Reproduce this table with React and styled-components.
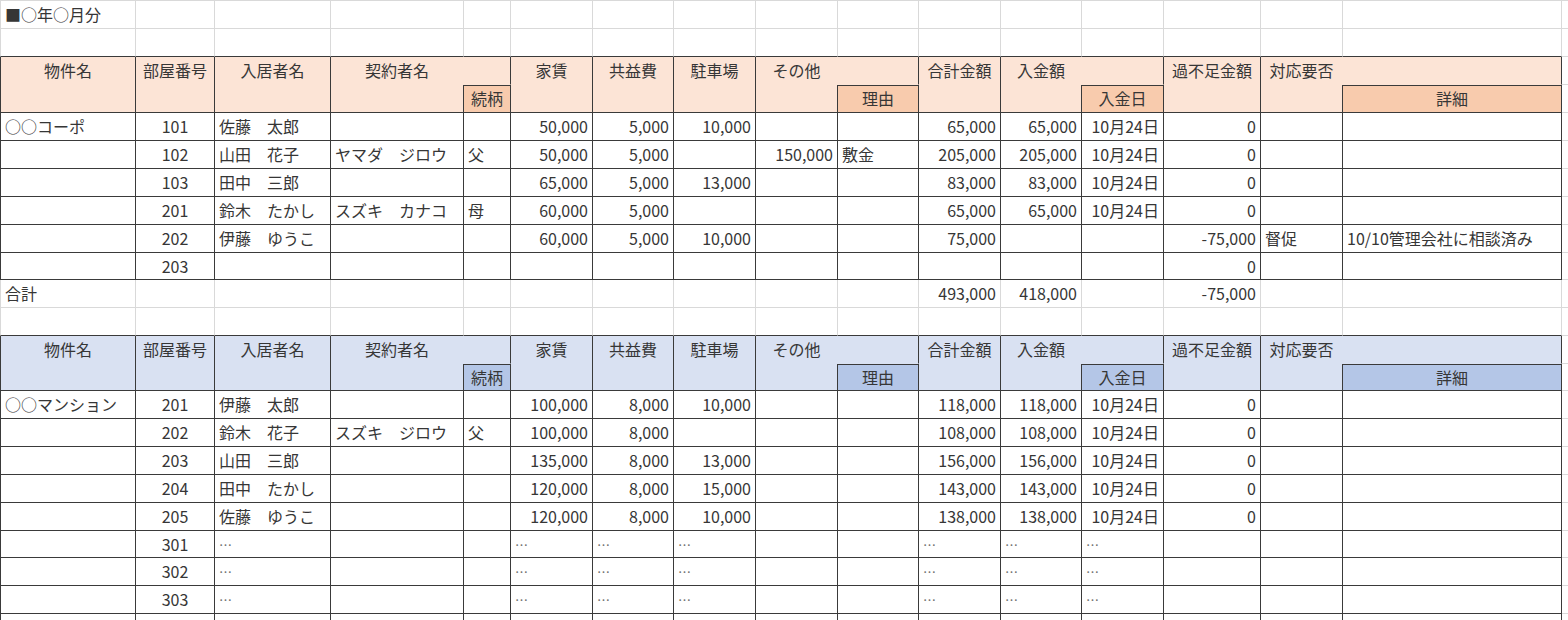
import React from 'react';
import styled, { createGlobalStyle, css } from 'styled-components';

const GRID = '#d9d9d9';
const LINE = '#3a3a3a';
const INK = '#363636';

const THEMES = {
  orange: { light: '#fce4d6', strong: '#f8cbad' },
  blue: { light: '#d9e1f2', strong: '#b4c6e7' },
};

const COL_WIDTHS = [136, 79, 116, 133, 47, 82, 81, 82, 82, 81, 82, 81, 82, 97, 82, 219];
const ROW_HEIGHTS = [28, 28, 28, 28, 28, 28, 28, 28, 28, 27, 28, 28, 28, 27, 28, 28, 28, 28, 28, 27, 28, 28, 28];

const Global = createGlobalStyle`
  html, body {
    margin: 0;
    padding: 0;
    background: #ffffff;
    overflow: hidden;
  }
  body {
    font-family: "Noto Sans CJK JP", "Noto Sans", sans-serif;
    color: ${INK};
  }
`;

const edge = (v) => (v === 'dark' ? LINE : v === 'none' ? 'transparent' : GRID);
const justify = { left: 'flex-start', center: 'center', right: 'flex-end' };

const Sheet = styled.div`
  display: grid;
  width: 1568px;
  grid-template-columns: ${COL_WIDTHS.map((w) => `${w}px`).join(' ')} 1fr;
  grid-template-rows: ${ROW_HEIGHTS.map((h) => `${h}px`).join(' ')};
  border-top: 1px solid ${GRID};
`;

const Cell = styled.div`
  box-sizing: border-box;
  min-width: 0;
  display: flex;
  align-items: ${(p) => (p.$head ? 'flex-start' : 'center')};
  justify-content: ${(p) => justify[p.$align || 'left']};
  padding: 0 ${(p) => 4 + (p.$padRight || 0)}px 0 4px;
  font-size: 16px;
  line-height: 27px;
  white-space: nowrap;
  overflow: visible;
  color: ${INK};
  background: ${(p) => p.$bg || 'transparent'};
  border-right: 1px solid ${(p) => edge(p.$r)};
  border-bottom: 1px solid ${(p) => edge(p.$b)};
  ${(p) => p.$l && css`border-left: 1px solid ${edge(p.$l)};`}
  ${(p) => p.$rs && css`grid-row: span ${p.$rs};`}
  ${(p) => p.$cs && css`grid-column: span ${p.$cs};`}
  ${(p) => p.$top && css`box-shadow: inset 0 1px 0 ${LINE};`}
`;

const Dots = styled.span`
  font-size: 13px;
  color: #707070;
  letter-spacing: -1px;
`;

const DATA_ALIGN = ['left', 'center', 'left', 'left', 'left', 'right', 'right', 'right', 'right', 'left', 'right', 'right', 'right', 'right', 'left', 'left'];

function renderValue(v) {
  if (v === '…') return <Dots>…</Dots>;
  return v;
}

function GridRow({ values = [], aboveTable, id }) {
  return Array.from({ length: 17 }, (_, i) => (
    <Cell
      key={`${id}-${i}`}
      $align={DATA_ALIGN[i] || 'left'}
      $r="light"
      $b={aboveTable && i < 16 ? 'dark' : 'light'}
      $l={i === 0 ? 'light' : undefined}
    >
      {values[i] || ''}
    </Cell>
  ));
}

function DataRow({ values, id }) {
  return Array.from({ length: 17 }, (_, i) => {
    const v = values[i] || '';
    const inTable = i < 16;
    return (
      <Cell
        key={`${id}-${i}`}
        $align={v === '…' ? 'left' : DATA_ALIGN[i] || 'left'}
        $r={inTable ? 'dark' : 'light'}
        $b={inTable ? 'dark' : 'light'}
        $l={i === 0 ? 'dark' : undefined}
      >
        {renderValue(v)}
      </Cell>
    );
  });
}

function HeaderRows({ theme, id }) {
  const { light, strong } = THEMES[theme];
  const tall = (label, extra = {}) => (
    <Cell key={`${id}-${label}`} $head $align="center" $rs={2} $bg={light} $r="dark" $b="dark" {...extra}>
      {label}
    </Cell>
  );
  const wide = (label, pad) => (
    <Cell key={`${id}-${label}`} $head $align="center" $cs={2} $padRight={pad} $bg={light} $r="dark" $b="none">
      {label}
    </Cell>
  );
  const blank = (k) => <Cell key={`${id}-b${k}`} $bg={light} $r="dark" $b="dark" />;
  const sub = (label) => (
    <Cell key={`${id}-${label}`} $align="center" $top $bg={strong} $r="dark" $b="dark">
      {label}
    </Cell>
  );
  const outside = (k) => <Cell key={`${id}-q${k}`} $r="light" $b="light" />;
  return [
    tall('物件名', { $l: 'dark' }),
    tall('部屋番号'),
    tall('入居者名'),
    wide('契約者名', 47),
    tall('家賃'),
    tall('共益費'),
    tall('駐車場'),
    wide('その他', 81),
    tall('合計金額'),
    wide('入金額', 82),
    tall('過不足金額'),
    wide('対応要否', 219),
    outside(1),
    blank(1),
    sub('続柄'),
    blank(2),
    sub('理由'),
    blank(3),
    sub('入金日'),
    blank(4),
    sub('詳細'),
    outside(2),
  ];
}

const S = '　';

const coopRows = [
  ['○○コーポ', '101', `佐藤${S}太郎`, '', '', '50,000', '5,000', '10,000', '', '', '65,000', '65,000', '10月24日', '0', '', ''],
  ['', '102', `山田${S}花子`, `ヤマダ${S}ジロウ`, '父', '50,000', '5,000', '', '150,000', '敷金', '205,000', '205,000', '10月24日', '0', '', ''],
  ['', '103', `田中${S}三郎`, '', '', '65,000', '5,000', '13,000', '', '', '83,000', '83,000', '10月24日', '0', '', ''],
  ['', '201', `鈴木${S}たかし`, `スズキ${S}カナコ`, '母', '60,000', '5,000', '', '', '', '65,000', '65,000', '10月24日', '0', '', ''],
  ['', '202', `伊藤${S}ゆうこ`, '', '', '60,000', '5,000', '10,000', '', '', '75,000', '', '', '-75,000', '督促', '10/10管理会社に相談済み'],
  ['', '203', '', '', '', '', '', '', '', '', '', '', '', '0', '', ''],
];

const mansionRows = [
  ['○○マンション', '201', `伊藤${S}太郎`, '', '', '100,000', '8,000', '10,000', '', '', '118,000', '118,000', '10月24日', '0', '', ''],
  ['', '202', `鈴木${S}花子`, `スズキ${S}ジロウ`, '父', '100,000', '8,000', '', '', '', '108,000', '108,000', '10月24日', '0', '', ''],
  ['', '203', `山田${S}三郎`, '', '', '135,000', '8,000', '13,000', '', '', '156,000', '156,000', '10月24日', '0', '', ''],
  ['', '204', `田中${S}たかし`, '', '', '120,000', '8,000', '15,000', '', '', '143,000', '143,000', '10月24日', '0', '', ''],
  ['', '205', `佐藤${S}ゆうこ`, '', '', '120,000', '8,000', '10,000', '', '', '138,000', '138,000', '10月24日', '0', '', ''],
  ['', '301', '…', '', '', '…', '…', '…', '', '', '…', '…', '…', '', '', ''],
  ['', '302', '…', '', '', '…', '…', '…', '', '', '…', '…', '…', '', '', ''],
  ['', '303', '…', '', '', '…', '…', '…', '', '', '…', '…', '…', '', '', ''],
  ['', '', '', '', '', '', '', '', '', '', '', '', '', '', '', ''],
];

const totalRow = ['合計', '', '', '', '', '', '', '', '', '', '493,000', '418,000', '', '-75,000', '', ''];

export default function App() {
  return (
    <>
      <Global />
      <Sheet>
        {GridRow({ values: ['■○年○月分'], id: 'title' })}
        {GridRow({ aboveTable: true, id: 'gap1' })}
        {HeaderRows({ theme: 'orange', id: 'h1' })}
        {coopRows.map((r, i) => DataRow({ values: r, id: `c${i}` }))}
        {GridRow({ values: totalRow, id: 'total' })}
        {GridRow({ aboveTable: true, id: 'gap2' })}
        {HeaderRows({ theme: 'blue', id: 'h2' })}
        {mansionRows.map((r, i) => DataRow({ values: r, id: `m${i}` }))}
      </Sheet>
    </>
  );
}
